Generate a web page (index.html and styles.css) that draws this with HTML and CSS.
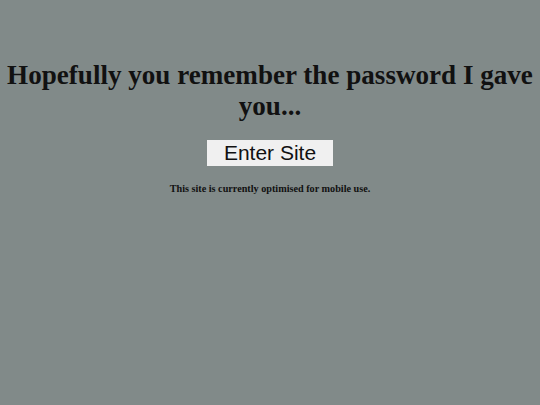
FILE: index.html
```html
<!DOCTYPE html>
<html>
<head>
<meta charset="utf-8">
<link rel="stylesheet" href="styles.css">
</head>
<body>
<div class="page">
  <h1 class="title">Hopefully you remember the password I gave you...</h1>
  <button class="enter">Enter Site</button>
  <p class="note">This site is currently optimised for mobile use.</p>
</div>
</body>
</html>
```
FILE: styles.css
```css
html, body {
  margin: 0;
  padding: 0;
  background: #818a89;
  height: 100%;
}
.page {
  display: flex;
  flex-direction: column;
  align-items: center;
  padding: 60px 4px 0;
  font-family: "Liberation Serif", serif;
  color: #111;
  text-align: center;
}
.title {
  margin: 0;
  font-size: 27.1px;
  line-height: 31px;
  font-weight: bold;
}
.enter {
  margin-top: 18px;
  width: 126px;
  height: 26px;
  padding: 0;
  border: none;
  background: #f0f0f0;
  font-family: "Liberation Sans", sans-serif;
  font-size: 21px;
  color: #111;
}
.note {
  margin: 17px 0 0;
  font-size: 10.2px;
  font-weight: bold;
}
```
